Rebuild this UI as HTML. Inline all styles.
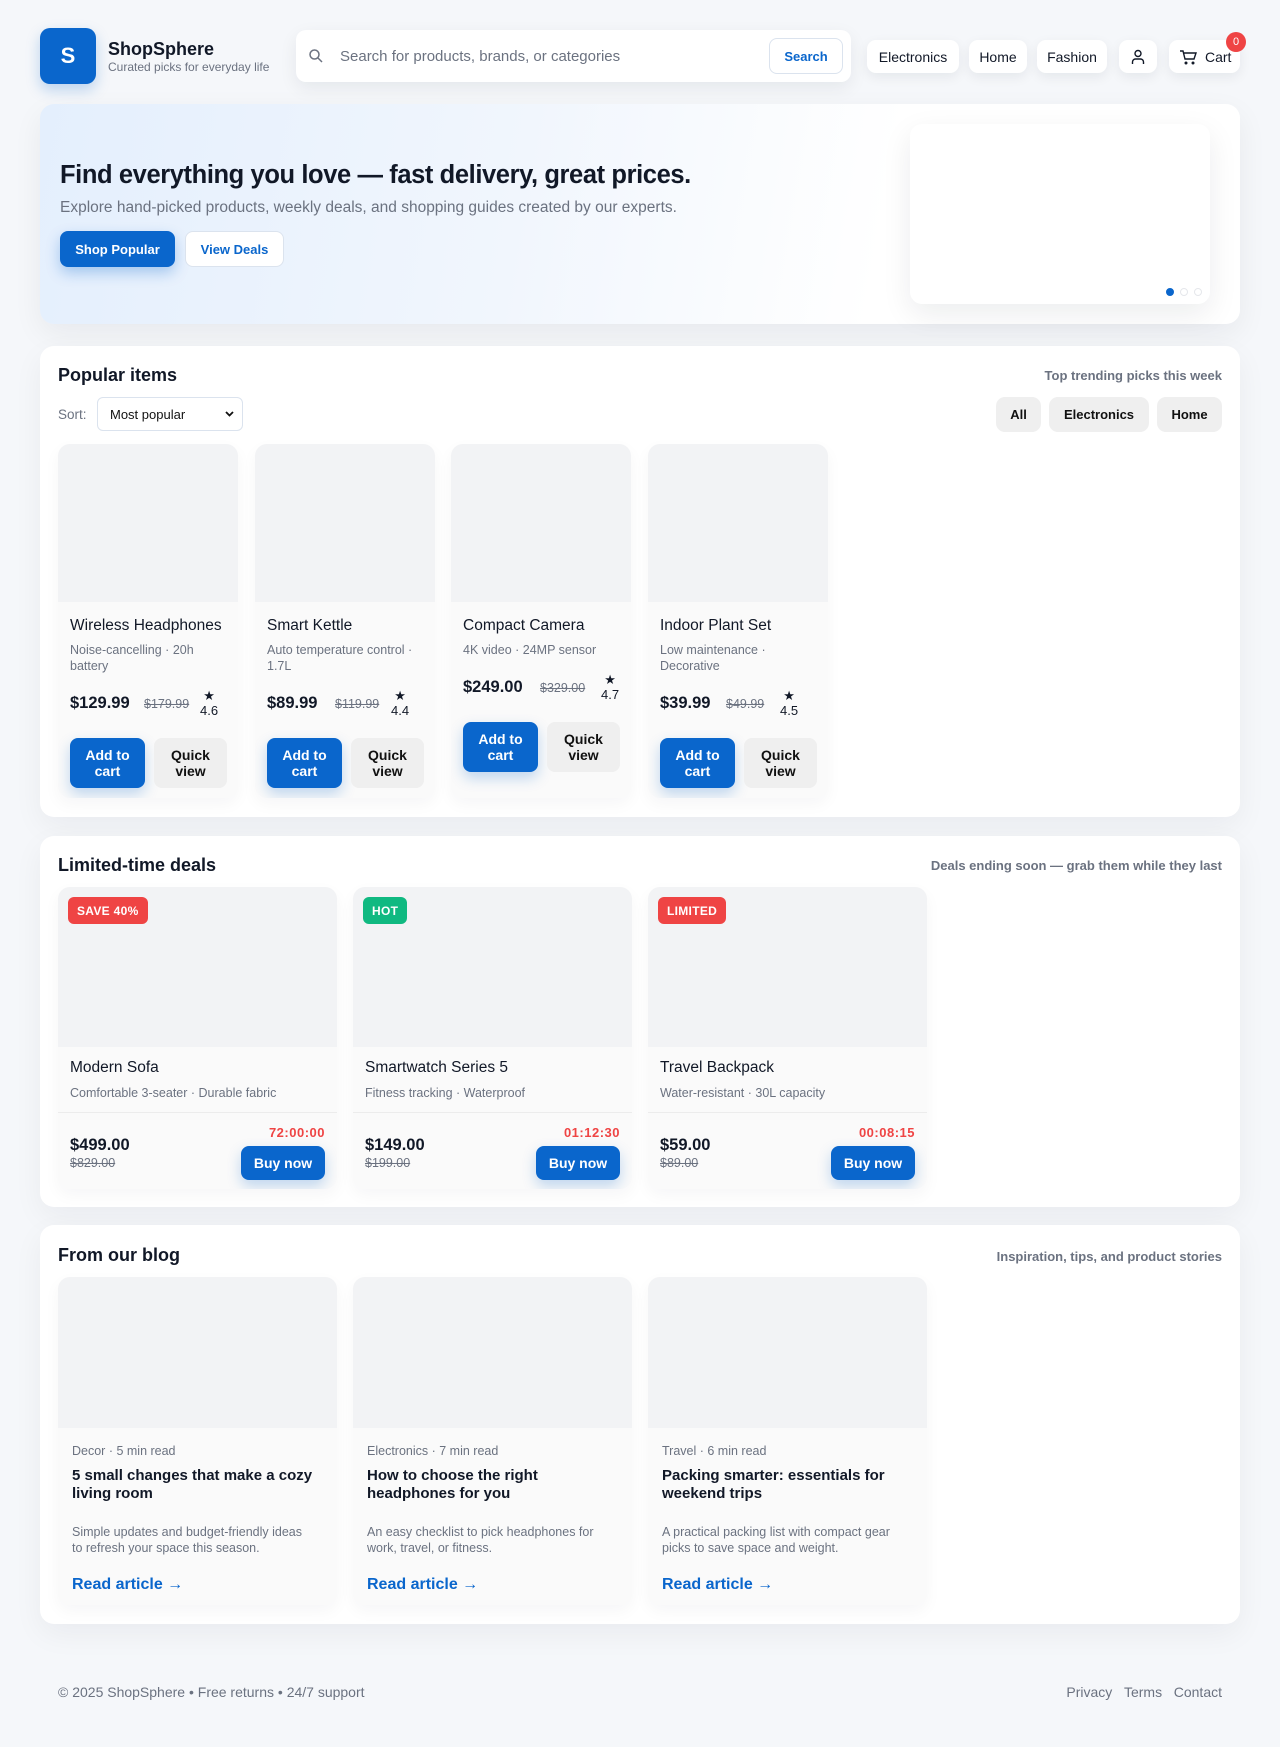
<!DOCTYPE html>
<html><head><meta charset="utf-8"><style>
*{box-sizing:border-box;margin:0;padding:0}
body{width:1280px;height:1747px;background:#f5f7fa;font-family:"Liberation Sans",Arial,sans-serif;color:#111827;position:relative;overflow:hidden}
.a{position:absolute}
.logo{left:40px;top:28px;width:56px;height:56px;border-radius:10px;background:#0a66cc;color:#fff;font-weight:700;font-size:22px;display:flex;align-items:center;justify-content:center;box-shadow:0 6px 14px rgba(10,102,204,.25)}
.brand{left:108px;top:39px;font-size:18px;font-weight:700;color:#111827}
.tag{left:108px;top:60px;font-size:12px;color:#6b7280}
.search{left:296px;top:30px;width:555px;height:52px;background:#fff;border-radius:10px;box-shadow:0 6px 18px rgba(15,23,42,.07)}
.search .ph{position:absolute;left:44px;top:18px;font-size:15px;color:#6b7280}
.search .btn{position:absolute;right:8px;top:8px;width:74px;height:36px;border:1px solid #dbe3ee;border-radius:8px;color:#0a66cc;font-weight:700;font-size:13px;display:flex;align-items:center;justify-content:center}
.nb{top:40px;height:33px;background:#fff;border-radius:9px;box-shadow:0 4px 12px rgba(15,23,42,.07);font-size:14px;color:#111827;display:flex;align-items:center;justify-content:center}
.badge{left:1226px;top:32px;width:20px;height:20px;border-radius:50%;background:#ef4444;color:#fff;font-size:11px;display:flex;align-items:center;justify-content:center}
.hero{left:40px;top:104px;width:1200px;height:220px;border-radius:14px;background:linear-gradient(100deg,#e4effd 0%,#f1f6fd 40%,#fff 70%);box-shadow:0 10px 30px rgba(15,23,42,.06)}
.h1{left:60px;top:161px;font-size:25.5px;font-weight:700;color:#111827;letter-spacing:-.4px}
.hsub{left:60px;top:199px;font-size:15.5px;color:#6b7280}
.b1{left:60px;top:231px;width:115px;height:36px;border-radius:8px;background:#0a66cc;color:#fff;font-weight:700;font-size:13px;display:flex;align-items:center;justify-content:center;box-shadow:0 6px 14px rgba(10,102,204,.3)}
.b2{left:185px;top:231px;width:99px;height:36px;border-radius:8px;border:1px solid #dbe3ee;background:#fff;color:#0a66cc;font-weight:700;font-size:13px;display:flex;align-items:center;justify-content:center}
.panel{left:910px;top:124px;width:300px;height:180px;background:#fff;border-radius:12px;box-shadow:0 10px 30px rgba(15,23,42,.08)}
.dot{top:288px;width:8px;height:8px;border-radius:50%;border:1.5px solid #e5e7eb}
.sec{left:40px;width:1200px;background:#fff;border-radius:14px;box-shadow:0 10px 30px rgba(15,23,42,.05)}
.st{left:58px;font-size:18px;font-weight:700;color:#111827}
.sr{right:58px;font-size:13px;font-weight:700;color:#6b7280}
.chip{top:397px;height:35px;border-radius:9px;background:#efefef;font-weight:700;font-size:13px;display:flex;align-items:center;justify-content:center;color:#111}
.card{background:#fafafa;border-radius:12px;overflow:hidden;box-shadow:0 6px 16px rgba(15,23,42,.04)}
.img{background:#f2f3f5}
.pc{top:444px;width:180px;height:354px}
.pc .img{height:158px}
.pc .t{position:absolute;left:12px;top:173px;font-size:15.5px;color:#111827}
.pc .s{position:absolute;left:12px;top:198px;width:160px;font-size:12.5px;line-height:16px;color:#6b7280}
.pc .pr{position:absolute;left:12px;font-size:16.5px;font-weight:700;color:#111827}
.pc .op{position:absolute;font-size:12.5px;color:#6b7280;text-decoration:line-through}
.pc .rt{position:absolute;font-size:13px;color:#111827;line-height:15px;text-align:center}
.pc .ac{position:absolute;left:12px;width:75px;height:50px;border-radius:8px;background:#0a66cc;color:#fff;font-weight:700;font-size:14px;line-height:16px;display:flex;align-items:center;justify-content:center;text-align:center;box-shadow:0 6px 14px rgba(10,102,204,.25)}
.pc .qv{position:absolute;left:96px;width:73px;height:50px;border-radius:8px;background:#efefef;color:#111;font-weight:700;font-size:14px;line-height:16px;display:flex;align-items:center;justify-content:center;text-align:center}
.dc{top:887px;width:279px;height:302px}
.dc .img{height:160px}
.dc .bd{position:absolute;left:10px;top:10px;height:27px;padding:0 9px;border-radius:6px;color:#fff;font-size:12px;font-weight:700;display:flex;align-items:center;letter-spacing:.3px}
.dc .t{position:absolute;left:12px;top:172px;font-size:15.5px}
.dc .s{position:absolute;left:12px;top:199px;font-size:12.5px;color:#6b7280}
.dc .ln{position:absolute;left:0;right:0;top:225px;border-top:1px solid #ececec}
.dc .tm{position:absolute;right:12px;top:238px;font-size:13px;font-weight:700;color:#ef4444;letter-spacing:.5px}
.dc .pr{position:absolute;left:12px;top:249px;font-size:16.5px;font-weight:700}
.dc .op{position:absolute;left:12px;top:269px;font-size:12.5px;color:#6b7280;text-decoration:line-through}
.dc .bn{position:absolute;right:12px;top:259px;width:84px;height:34px;border-radius:8px;background:#0a66cc;color:#fff;font-weight:700;font-size:14px;display:flex;align-items:center;justify-content:center;box-shadow:0 6px 14px rgba(10,102,204,.25)}
.bc{top:1277px;width:279px;height:328px}
.bc .img{height:151px}
.bc .m{position:absolute;left:14px;top:167px;font-size:12.5px;color:#6b7280}
.bc .t{position:absolute;left:14px;top:190px;width:250px;font-size:15px;font-weight:700;line-height:18px}
.bc .s{position:absolute;left:14px;top:247px;width:235px;font-size:12.5px;line-height:16px;color:#6b7280}
.bc .r{position:absolute;left:14px;top:299px;font-size:16px;font-weight:700;color:#0a66cc}
.ft{top:1684px;font-size:14px;color:#6b7280}
</style></head><body>
<div class="a logo">S</div>
<div class="a brand">ShopSphere</div>
<div class="a tag">Curated picks for everyday life</div>
<div class="a search">
<svg style="position:absolute;left:12px;top:18px" width="16" height="16" viewBox="0 0 16 16" fill="none" stroke="#6b7280" stroke-width="1.5"><circle cx="6.5" cy="6.5" r="4.5"/><path d="M10 10l4 4"/></svg>
<div class="ph">Search for products, brands, or categories</div><div class="btn">Search</div></div>
<div class="a nb" style="left:867px;width:92px">Electronics</div>
<div class="a nb" style="left:969px;width:58px">Home</div>
<div class="a nb" style="left:1037px;width:70px">Fashion</div>
<div class="a nb" style="left:1119px;width:38px"><svg width="16" height="16" viewBox="0 0 16 16" fill="none" stroke="#111827" stroke-width="1.4"><circle cx="8" cy="4.5" r="3"/><path d="M2.5 15v-2a3 3 0 0 1 3-3h5a3 3 0 0 1 3 3v2"/></svg></div>
<div class="a nb" style="left:1169px;width:71px;justify-content:flex-start;padding-left:10px"><svg width="18" height="16" viewBox="0 0 18 16" fill="none" stroke="#111827" stroke-width="1.4"><path d="M1 2h3l2 8h9l2-6H5"/><circle cx="7" cy="14" r=".8"/><circle cx="14" cy="14" r=".8"/></svg><span style="margin-left:8px">Cart</span></div>
<div class="a badge">0</div>

<div class="a hero"></div>
<div class="a h1">Find everything you love — fast delivery, great prices.</div>
<div class="a hsub">Explore hand-picked products, weekly deals, and shopping guides created by our experts.</div>
<div class="a b1">Shop Popular</div>
<div class="a b2">View Deals</div>
<div class="a panel"></div>
<div class="a dot" style="left:1166px;background:#0a66cc;border-color:#0a66cc"></div>
<div class="a dot" style="left:1180px"></div>
<div class="a dot" style="left:1194px"></div>

<div class="a sec" style="top:346px;height:471px"></div>
<div class="a st" style="top:365px">Popular items</div>
<div class="a sr" style="top:368px">Top trending picks this week</div>
<div class="a" style="left:58px;top:407px;font-size:13.5px;color:#6b7280">Sort:</div>
<div class="a" style="left:97px;top:397px;width:146px;height:34px;border:1px solid #dbe3ee;border-radius:6px;font-size:13px;padding:9px 12px;color:#111">Most popular<svg style="position:absolute;right:8px;top:13px" width="9" height="6" viewBox="0 0 9 6"><path d="M1 1l3.5 3.5L8 1" stroke="#111" stroke-width="1.8" fill="none"/></svg></div>
<div class="a chip" style="left:996px;width:45px">All</div>
<div class="a chip" style="left:1049px;width:100px">Electronics</div>
<div class="a chip" style="left:1157px;width:65px">Home</div>

<div class="a card pc" style="left:58px"><div class="img"></div><div class="t">Wireless Headphones</div><div class="s">Noise-cancelling · 20h battery</div><div class="pr" style="top:250px">$129.99</div><div class="op" style="left:86px;top:253px">$179.99</div><div class="rt" style="left:142px;top:244px">★<br>4.6</div><div class="ac" style="top:294px">Add to<br>cart</div><div class="qv" style="top:294px">Quick<br>view</div></div>
<div class="a card pc" style="left:255px"><div class="img"></div><div class="t">Smart Kettle</div><div class="s">Auto temperature control · 1.7L</div><div class="pr" style="top:250px">$89.99</div><div class="op" style="left:80px;top:253px">$119.99</div><div class="rt" style="left:136px;top:244px">★<br>4.4</div><div class="ac" style="top:294px">Add to<br>cart</div><div class="qv" style="top:294px">Quick<br>view</div></div>
<div class="a card pc" style="left:451px"><div class="img"></div><div class="t">Compact Camera</div><div class="s">4K video · 24MP sensor</div><div class="pr" style="top:234px">$249.00</div><div class="op" style="left:89px;top:237px">$329.00</div><div class="rt" style="left:150px;top:228px">★<br>4.7</div><div class="ac" style="top:278px">Add to<br>cart</div><div class="qv" style="top:278px">Quick<br>view</div></div>
<div class="a card pc" style="left:648px"><div class="img"></div><div class="t">Indoor Plant Set</div><div class="s">Low maintenance · Decorative</div><div class="pr" style="top:250px">$39.99</div><div class="op" style="left:78px;top:253px">$49.99</div><div class="rt" style="left:132px;top:244px">★<br>4.5</div><div class="ac" style="top:294px">Add to<br>cart</div><div class="qv" style="top:294px">Quick<br>view</div></div>

<div class="a sec" style="top:836px;height:371px"></div>
<div class="a st" style="top:855px">Limited-time deals</div>
<div class="a sr" style="top:858px">Deals ending soon — grab them while they last</div>
<div class="a card dc" style="left:58px"><div class="img"></div><div class="bd" style="background:#ef4444">SAVE 40%</div><div class="t">Modern Sofa</div><div class="s">Comfortable 3-seater · Durable fabric</div><div class="ln"></div><div class="tm">72:00:00</div><div class="pr">$499.00</div><div class="op">$829.00</div><div class="bn">Buy now</div></div>
<div class="a card dc" style="left:353px"><div class="img"></div><div class="bd" style="background:#10b981">HOT</div><div class="t">Smartwatch Series 5</div><div class="s">Fitness tracking · Waterproof</div><div class="ln"></div><div class="tm">01:12:30</div><div class="pr">$149.00</div><div class="op">$199.00</div><div class="bn">Buy now</div></div>
<div class="a card dc" style="left:648px"><div class="img"></div><div class="bd" style="background:#ef4444">LIMITED</div><div class="t">Travel Backpack</div><div class="s">Water-resistant · 30L capacity</div><div class="ln"></div><div class="tm">00:08:15</div><div class="pr">$59.00</div><div class="op">$89.00</div><div class="bn">Buy now</div></div>

<div class="a sec" style="top:1225px;height:399px"></div>
<div class="a st" style="top:1245px">From our blog</div>
<div class="a sr" style="top:1249px">Inspiration, tips, and product stories</div>
<div class="a card bc" style="left:58px"><div class="img"></div><div class="m">Decor · 5 min read</div><div class="t">5 small changes that make a cozy living room</div><div class="s">Simple updates and budget-friendly ideas to refresh your space this season.</div><div class="r">Read article →</div></div>
<div class="a card bc" style="left:353px"><div class="img"></div><div class="m">Electronics · 7 min read</div><div class="t">How to choose the right headphones for you</div><div class="s">An easy checklist to pick headphones for work, travel, or fitness.</div><div class="r">Read article →</div></div>
<div class="a card bc" style="left:648px"><div class="img"></div><div class="m">Travel · 6 min read</div><div class="t">Packing smarter: essentials for weekend trips</div><div class="s">A practical packing list with compact gear picks to save space and weight.</div><div class="r">Read article →</div></div>

<div class="a ft" style="left:58px">© 2025 ShopSphere • Free returns • 24/7 support</div>
<div class="a ft" style="right:58px">Privacy &nbsp;&nbsp;Terms &nbsp;&nbsp;Contact</div>
</body></html>
